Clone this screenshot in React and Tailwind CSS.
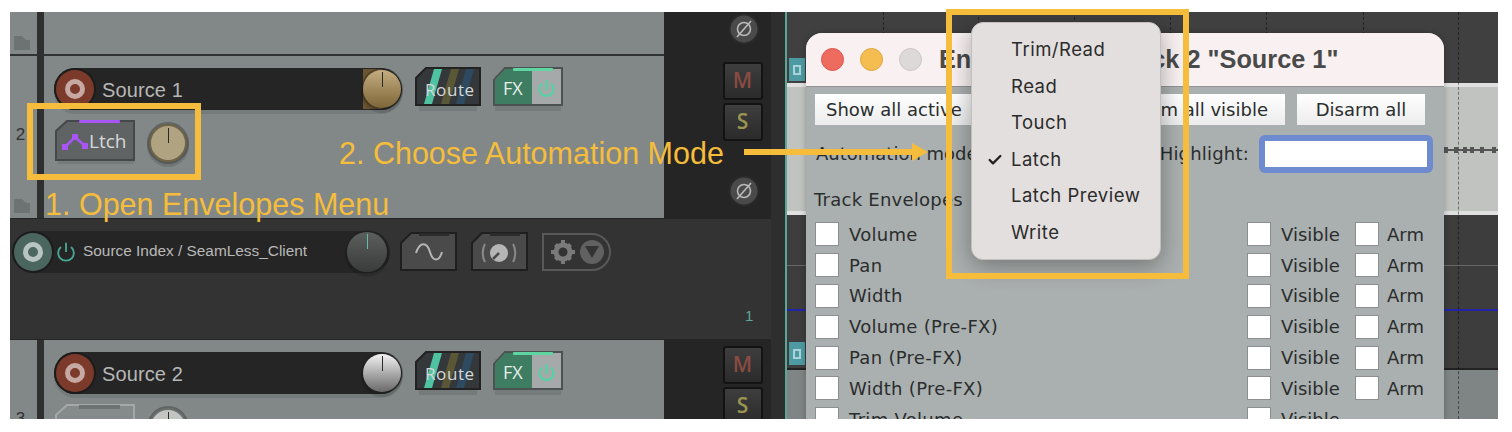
import { Check } from 'lucide-react';

const grid = [883, 978, 1074, 1170, 1266, 1363, 1458];
const envelopes = [
  ['Volume', true],
  ['Pan', true],
  ['Width', true],
  ['Volume (Pre-FX)', true],
  ['Pan (Pre-FX)', true],
  ['Width (Pre-FX)', true],
  ['Trim Volume', false],
];
const modes = ['Trim/Read', 'Read', 'Touch', 'Latch', 'Latch Preview', 'Write'];
const blips = [2, 14, 24, 31, 40, 50];

function Folder() {
  return (
    <svg width="16" height="14" viewBox="0 0 16 14">
      <path d="M0 0h8l4 4h4v10H0z" fill="#6d7372" />
    </svg>
  );
}

function Power({ size = 22, color = '#5fd3a6', stroke = 2 }) {
  return (
    <svg width={size} height={size} viewBox="0 0 24 24" fill="none" stroke={color} strokeWidth={stroke}>
      <path d="M12 2v10" />
      <path d="M6.5 6.5a8.5 8.5 0 1 0 11 0" />
    </svg>
  );
}

function RecButton({ teal }) {
  return (
    <div className={`w-[38px] h-[38px] rounded-full flex items-center justify-center shrink-0 shadow-[0_0_0_2px_#1c1c1c] ${teal ? 'bg-[#4b655f]' : 'bg-[#7c3a2a]'}`}>
      <div className={`w-[20px] h-[20px] rounded-full border-[5px] ${teal ? 'border-[#b9c4c0] bg-[#4b655f]' : 'border-[#c6a9a2] bg-[#7c3a2a]'}`} />
    </div>
  );
}

function Knob({ kind = 'gold', size = 38 }) {
  const fill = {
    gold: 'bg-gradient-to-b from-[#c4ad80] to-[#7e6638]',
    silver: 'bg-gradient-to-b from-[#f4f4f4] to-[#6a6a6a]',
    dark: 'bg-gradient-to-b from-[#5c5f5e] to-[#3a3c3b]',
    tan: 'bg-[#b0a382] border-2 border-[#6f6448]',
    pale: 'bg-[#c3c5c3] border-2 border-[#6c7070]',
  }[kind];
  return (
    <div className={`relative rounded-full shrink-0 ${fill} shadow-[0_0_0_2px_#1e1e1e55,0_3px_0_2px_#0000001f]`} style={{ width: size, height: size }}>
      <div className={`absolute left-1/2 top-[2px] w-px h-[15px] ${kind === 'dark' ? 'bg-[#5fc0a8]' : 'bg-[#2a2a2a]'}`} />
    </div>
  );
}

function EnvButton({ active }) {
  return (
    <svg width="82" height="46" viewBox="0 0 82 46" className="shrink-0">
      {active && <rect x="3" y="10" width="76" height="34" fill="#00000018" />}
      <path d="M1 40V11L12 1H79V40Z" fill={active ? '#5f6364' : '#858b8a'} stroke={active ? '#44484a' : '#a4a9a8'} strokeWidth="2" />
      {active ? (
        <>
          <rect x="24" y="0" width="41" height="3" rx="1" fill="#a855f7" />
          <path d="M10 27L20 17L30 26" fill="none" stroke="#a855f7" strokeWidth="2.5" />
          <rect x="7" y="24" width="6" height="6" fill="#a855f7" />
          <rect x="17" y="14" width="6" height="6" fill="#a855f7" />
          <rect x="27" y="23" width="6" height="6" fill="#a855f7" />
          <text x="34" y="28" fontSize="19" fill="#d5d8d8" fontFamily="'Open Sans', sans-serif">Ltch</text>
        </>
      ) : (
        <rect x="24" y="1" width="41" height="4" fill="#6d7372" />
      )}
    </svg>
  );
}

function RouteButton() {
  return (
    <svg width="67" height="44" viewBox="0 0 67 44" className="shrink-0">
      <rect x="4" y="8" width="58" height="36" fill="#00000018" />
      <path d="M1 38V11L11 1H65V38Z" fill="#34383a" stroke="#222" strokeWidth="2" />
      <path d="M19 2H27L17 37H9Z" fill="#4fc2a2" />
      <path d="M36 2H44L34 37H26Z" fill="#5a5737" />
      <path d="M51 2H59L49 37H41Z" fill="#2e4a61" />
      <text x="10" y="29" fontSize="17" letterSpacing="0.6" fill="#d5d8d8" fontFamily="'Open Sans', sans-serif">Route</text>
    </svg>
  );
}

function FxButton() {
  return (
    <svg width="71" height="44" viewBox="0 0 71 44" className="shrink-0">
      <rect x="2" y="8" width="66" height="36" fill="#00000018" />
      <path d="M1 38V13L12 1H69V38Z" fill="#a6a9a9" stroke="#4c5152" strokeWidth="2" />
      <path d="M2 37V13L12 2H39V37Z" fill="#3f7d63" />
      <rect x="20" y="1" width="40" height="3" rx="1" fill="#5fd6a2" />
      <text x="10" y="28" fontSize="18" fill="#e6eeea" fontFamily="'Open Sans', sans-serif">FX</text>
      <path d="M53.5 13V23" stroke="#52d3a4" strokeWidth="2.2" />
      <path d="M49 16.5A7 7 0 1 0 58 16.5" fill="none" stroke="#52d3a4" strokeWidth="2.2" />
    </svg>
  );
}

function SquareKey({ letter, color }) {
  return (
    <div className={`w-[40px] h-[38px] rounded-[3px] border-2 border-[#131313] bg-gradient-to-b from-[#3e3e3e] to-[#2b2b2b] flex items-center justify-center font-semibold text-[21px] font-['Open_Sans',sans-serif] ${color}`}>
      {letter}
    </div>
  );
}

function Phase() {
  return (
    <svg width="32" height="32" viewBox="0 0 32 32">
      <circle cx="16" cy="16" r="14.5" fill="#4a4a4a" stroke="#2a2a2a" strokeWidth="2" />
      <circle cx="16" cy="16" r="6.5" fill="none" stroke="#b8b8b8" strokeWidth="1.6" />
      <path d="M9 24L23 8" stroke="#b8b8b8" strokeWidth="1.6" />
    </svg>
  );
}

function TrackRow({ name, knob, number, lowerKnob, active, height, top }) {
  return (
    <div className="flex bg-[#818887] shrink-0 overflow-hidden" style={{ height }}>
      <div className="w-[27px] shrink-0 flex flex-col items-center pr-[6px]">
        <div className="shrink-0 h-[70px]" />
        <span className="shrink-0 text-[17px] leading-none text-[#333] font-['Liberation_Sans',sans-serif]">{number}</span>
      </div>
      <div className="w-[7px] bg-[#2f2f2f] shrink-0" />
      <div className="flex-1 flex flex-col pl-[10px]" style={{ paddingTop: top }}>
        <div className="flex items-center h-[42px] shrink-0">
          <div className="w-[348px] h-[42px] rounded-full bg-[#252525] flex items-center justify-between pl-[2px] pr-[1px] shadow-[0_4px_0_#00000018]">
            <div className="flex items-center gap-[8px]">
              <RecButton />
              <span className="text-[20px] text-[#b7b7b7] tracking-[0.1px] pt-[2px] font-['Liberation_Sans',sans-serif]">{name}</span>
            </div>
            <div className="relative flex items-center">
              {knob === 'gold' && <div className="absolute -left-[0.5px] w-[19px] h-[40px] bg-[#6b5430]" />}
              <Knob kind={knob} />
            </div>
          </div>
          <div className="ml-[13px]"><RouteButton /></div>
          <div className="ml-[11px]"><FxButton /></div>
        </div>
        <div className="flex items-center mt-[10px] gap-[12px] pl-[1px] shrink-0">
          <EnvButton active={active} />
          <Knob kind={lowerKnob} />
        </div>
      </div>
      <div className="w-[107px] bg-[#252525] shrink-0 flex flex-col items-center pl-[50px]">
        <div className="flex flex-col gap-[3px] shrink-0" style={{ marginTop: top - 6 }}>
          <SquareKey letter="M" color="text-[#8a4b42]" />
          <SquareKey letter="S" color="text-[#9a9550]" />
        </div>
      </div>
    </div>
  );
}

function ChildRow() {
  return (
    <div className="flex-1 bg-[#333333] border-t border-[#252525] border-b relative pt-[12px] pl-[4px]">
      <div className="flex items-center">
        <div className="w-[376px] h-[42px] rounded-full bg-[#252525] flex items-center justify-between pr-[3px]">
          <div className="flex items-center">
            <RecButton teal />
            <div className="ml-[3px]"><Power color="#47a893" /></div>
            <span className="ml-[6px] -mt-[2px] text-[15.4px] text-[#b9b9b9] font-['Liberation_Sans',sans-serif]">Source Index / SeamLess_Client</span>
          </div>
          <Knob kind="dark" size={40} />
        </div>
        <svg width="58" height="40" viewBox="0 0 58 40" className="ml-[10px] shrink-0">
          <path d="M1 38V11L11 1H56V38Z" fill="#4a4a4a" stroke="#1f1f1f" strokeWidth="2" />
          <rect x="19" y="1" width="30" height="3" fill="#2b2b2b" />
          <path d="M16 21C20 9 27 10 30 20C33 30 39 30 42 20" fill="none" stroke="#b5b5b5" strokeWidth="2" />
        </svg>
        <svg width="58" height="40" viewBox="0 0 58 40" className="ml-[13px] shrink-0">
          <path d="M1 38V11L11 1H56V38Z" fill="#4a4a4a" stroke="#1f1f1f" strokeWidth="2" />
          <rect x="19" y="1" width="30" height="3" fill="#2b2b2b" />
          <circle cx="28" cy="21" r="9" fill="#b5b5b5" />
          <path d="M28 21L22 27" stroke="#4a4a4a" strokeWidth="2.5" />
          <path d="M14 12C11 17 11 25 14 30M42 12C45 17 45 25 42 30" fill="none" stroke="#8a8a8a" strokeWidth="2" />
        </svg>
        <div className="ml-[13px] w-[69px] h-[38px] rounded-r-[19px] border-2 border-[#595959] flex items-center pl-[7px] gap-[5px]">
          <svg width="24" height="24" viewBox="0 0 24 24" fill="#7a7a7a">
            <circle cx="12" cy="12" r="7" fill="none" stroke="#7a7a7a" strokeWidth="5" />
            <path d="M10 0h4v4h-4zM10 20h4v4h-4zM0 10h4v4H0zM20 10h4v4h-4zM3 6l3-3 3 3-3 3zM15 6l3-3 3 3-3 3zM3 18l3-3 3 3-3 3zM15 18l3-3 3 3-3 3z" />
          </svg>
          <div className="w-[24px] h-[24px] rounded-full bg-[#616161] flex items-center justify-center">
            <svg width="14" height="12" viewBox="0 0 14 12"><path d="M0 0h14L7 12z" fill="#333" /></svg>
          </div>
        </div>
      </div>
      <span className="absolute left-[735px] top-[86px] text-[15px] text-[#5fa79a] font-['Liberation_Sans',sans-serif]">1</span>
    </div>
  );
}

function Box({ className = '' }) {
  return <div className={`w-[24px] h-[24px] bg-white border border-[#8c8f8f] shrink-0 ${className}`} />;
}

function ItemTab({ top }) {
  return (
    <div className="absolute left-[2px] w-[16px] h-[23px] bg-[#4e9aa3] flex items-center justify-center" style={{ top }}>
      <div className="w-[8px] h-[10px] border-2 border-[#a9d3d6]" />
    </div>
  );
}

function EnvelopeWindow() {
  return (
    <div className="absolute left-[796px] top-[21px] w-[638px] h-[420px] rounded-t-[16px] bg-[#aab0af] overflow-hidden font-['DejaVu_Sans',sans-serif] text-[#2a2d2d] shadow-[0_0_6px_#00000040]">
      <div className="h-[54px] bg-[#f9f1f1] border-b border-[#8f9393] relative flex items-center pl-[15px] gap-[16px]">
        <div className="w-[23px] h-[23px] rounded-full bg-[#ee6b60] border border-[#d9574d]" />
        <div className="w-[23px] h-[23px] rounded-full bg-[#f5bd4f] border border-[#dca63e]" />
        <div className="w-[23px] h-[23px] rounded-full bg-[#ded9d9] border border-[#cbc6c6]" />
        <span className="ml-[1px] text-[25.3px] font-bold text-[#4a4a4a] whitespace-nowrap font-['Liberation_Sans',sans-serif]">Envelopes for Track 2 "Source 1"</span>
      </div>
      <div className="flex justify-between pl-[9px] pr-[19px] mt-[7px]">
        <div className="w-[400px] h-[31px] bg-gradient-to-b from-white to-[#ececec] flex items-center pl-[11px] text-[18px]">Show all active</div>
        <div className="flex gap-[12px]">
          <div className="w-[130px] h-[31px] bg-gradient-to-b from-white to-[#ececec] flex items-center justify-end pr-[17px] text-[18px] whitespace-nowrap">Arm all visible</div>
          <div className="w-[128px] h-[31px] bg-gradient-to-b from-white to-[#ececec] flex items-center justify-center text-[18px]">Disarm all</div>
        </div>
      </div>
      <div className="flex items-center justify-between pl-[10px] pr-[11px] mt-[9px] h-[39px] text-[18px]">
        <span>Automation mode:</span>
        <div className="flex items-center gap-[10px]">
          <span className="tracking-[0.2px]">Highlight:</span>
          <div className="w-[174px] h-[38px] rounded-[6px] bg-[#6e8bd0] p-[6px]">
            <div className="w-full h-full bg-white" />
          </div>
        </div>
      </div>
      <div className="pl-[8px] mt-[15px] text-[18px] leading-[24px] tracking-[0.25px]">Track Envelopes</div>
      <div className="mt-[10.4px] pl-[9px] pr-[19px] flex flex-col gap-[6.8px]">
        {envelopes.map(([label, arm]) => (
          <div key={label} className="flex items-center h-[24px] text-[18px]">
            <Box />
            <span className="ml-[10px] flex-1 tracking-[0.3px]">{label}</span>
            <Box />
            <span className="ml-[10px] w-[74px]">Visible</span>
            {arm ? <Box /> : <div className="w-[24px]" />}
            <span className="ml-[8px] w-[38px]">{arm ? 'Arm' : ''}</span>
          </div>
        ))}
      </div>
    </div>
  );
}

function ModeMenu() {
  return (
    <div className="absolute left-[961px] top-[10px] w-[190px] h-[238px] rounded-[12px] bg-[#e3dfde] border border-[#c2bfbe] shadow-[0_6px_24px_#00000055] pt-[9px] font-['Inter',sans-serif] text-[18.5px] tracking-[0.5px] text-[#2b2b2b]">
      {modes.map((m) => (
        <div key={m} className="h-[36.5px] flex items-center relative pl-[39px]">
          {m === 'Latch' && <Check size={16} strokeWidth={3.5} className="absolute left-[15px] text-[#222]" />}
          {m}
        </div>
      ))}
    </div>
  );
}

export default function App() {
  return (
    <div className="relative w-[1512px] h-[432px] bg-white pt-[12px] pl-[10px] overflow-hidden">
      <div className="relative w-[1488px] h-[407px] overflow-hidden flex bg-[#333333]">
        {/* track panel */}
        <div className="w-[761px] shrink-0 flex flex-col">
          <div className="flex h-[44px] shrink-0 bg-[#818887] border-b-2 border-[#2f3333]">
            <div className="w-[27px] shrink-0 flex items-end pl-[4px] pb-[4px]"><Folder /></div>
            <div className="w-[7px] bg-[#2f2f2f] shrink-0" />
            <div className="flex-1" />
            <div className="w-[107px] bg-[#252525] shrink-0 flex justify-end pr-[11px] pt-[1px] -mb-[2px]"><Phase /></div>
          </div>
          <div className="relative">
            <TrackRow name="Source 1" knob="gold" number="2" lowerKnob="tan" active height={162} top={12} />
            <div className="absolute left-[4px] top-[143px]"><Folder /></div>
            <div className="absolute left-[718px] top-[119px]"><Phase /></div>
          </div>
          <ChildRow />
          <TrackRow name="Source 2" knob="silver" number="3" lowerKnob="pale" height={79} top={12} />
        </div>
        {/* gap to the arrange view */}
        <div className="w-[16px] bg-[#2e2e2e] shrink-0 border-r-2 border-[#5aa697]" />
        {/* arrange view */}
        <div className="flex-1 flex flex-col relative">
          <div className="h-[71px] bg-[#404040]" />
          <div className="h-[132px] bg-[#c1c3c1] border-y-4 border-[#dfe0df] relative">
            <div className="absolute left-0 right-0 top-[62px] h-[2px] bg-[#555]" />
            {blips.map((x) => (
              <div key={x} className="absolute top-[60px] w-[4px] h-[6px] bg-[#555]" style={{ right: x }} />
            ))}
          </div>
          <div className="flex-1 bg-[#3d3d3d] relative">
            <div className="absolute left-0 right-0 top-[50px] h-px bg-[#666]" />
            <div className="absolute left-0 right-0 top-[94px] h-[2px] bg-[#2222aa]" />
          </div>
          <div className="h-[51px] bg-[#7f8584] border-t-2 border-[#222]" />
          <ItemTab top={46} />
          <ItemTab top={330} />
          {grid.map((x) => (
            <div key={x} className="absolute top-0 bottom-0 border-l border-dashed border-[#00000070]" style={{ left: x - 787 }} />
          ))}
        </div>
        <EnvelopeWindow />
        <ModeMenu />
      </div>

      {/* annotations */}
      <div className="absolute left-[27px] top-[103px] w-[174px] h-[77px] border-[6px] border-[#f5bd3b]" />
      <div className="absolute left-[946px] top-[9px] w-[243px] h-[270px] border-[6px] border-[#f5bd3b]" />
      <span className="absolute left-[45px] top-[187px] text-[30.5px] leading-[34px] text-[#f5bd3b] whitespace-nowrap font-['Liberation_Sans',sans-serif]">1. Open Envelopes Menu</span>
      <span className="absolute left-[339px] top-[136px] text-[30.5px] leading-[34px] text-[#f5bd3b] whitespace-nowrap font-['Liberation_Sans',sans-serif]">2. Choose Automation Mode</span>
      <svg className="absolute left-[744px] top-[143px]" width="186" height="18" viewBox="0 0 186 18">
        <path d="M0 6H168V0L184 9L168 18V12H0Z" fill="#f5bd3b" />
      </svg>
    </div>
  );
}
